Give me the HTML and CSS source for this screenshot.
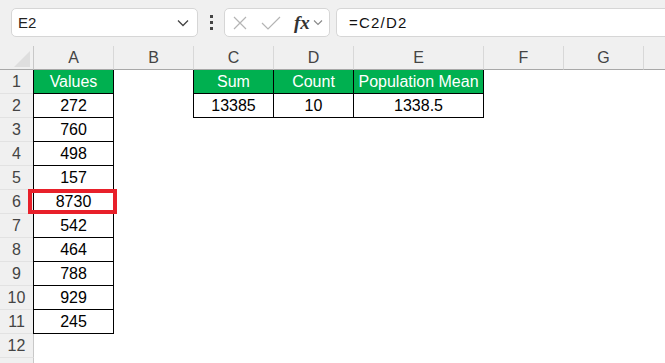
FILE: index.html
```html
<!DOCTYPE html>
<html>
<head>
<meta charset="utf-8">
<link rel="stylesheet" href="styles.css">
</head>
<body>
<div class="toolbar">
  <div class="namebox"><span>E2</span>
    <svg class="chev" width="12" height="8" viewBox="0 0 12 8"><path d="M1 1.5 L6 6.5 L11 1.5" fill="none" stroke="#444" stroke-width="1.3"/></svg>
  </div>
  <div class="dots"><i></i><i></i><i></i></div>
  <div class="controls">
    <svg width="14" height="14" viewBox="0 0 14 14"><path d="M1 1 L13 13 M13 1 L1 13" stroke="#b4b4b4" stroke-width="1.2"/></svg>
    <svg width="20" height="14" viewBox="0 0 20 14"><path d="M1 7 L7 13 L19 1" fill="none" stroke="#b4b4b4" stroke-width="1.2"/></svg>
    <span class="fx">fx</span>
    <svg width="10" height="7" viewBox="0 0 10 7"><path d="M1 1.5 L5 5.5 L9 1.5" fill="none" stroke="#888" stroke-width="1.1"/></svg>
  </div>
  <div class="formula">=C2/D2</div>
</div>
<div class="sheet">
  <div class="ch corner"><svg width="16" height="16" viewBox="0 0 16 16"><path d="M16 0 L16 16 L0 16 Z" fill="#dedede"/></svg></div>
  <div class="ch">A</div><div class="ch">B</div><div class="ch">C</div><div class="ch">D</div><div class="ch">E</div><div class="ch">F</div><div class="ch">G</div><div class="ch last"></div>

  <div class="rh">1</div><div class="c t head left">Values</div><div class="c"></div><div class="c t head left">Sum</div><div class="c t head">Count</div><div class="c t head">Population Mean</div><div class="c"></div><div class="c"></div><div class="c"></div>
  <div class="rh">2</div><div class="c t left">272</div><div class="c"></div><div class="c t left">13385</div><div class="c t">10</div><div class="c t">1338.5</div><div class="c"></div><div class="c"></div><div class="c"></div>
  <div class="rh">3</div><div class="c t left">760</div><div class="c"></div><div class="c"></div><div class="c"></div><div class="c"></div><div class="c"></div><div class="c"></div><div class="c"></div>
  <div class="rh">4</div><div class="c t left">498</div><div class="c"></div><div class="c"></div><div class="c"></div><div class="c"></div><div class="c"></div><div class="c"></div><div class="c"></div>
  <div class="rh">5</div><div class="c t left">157</div><div class="c"></div><div class="c"></div><div class="c"></div><div class="c"></div><div class="c"></div><div class="c"></div><div class="c"></div>
  <div class="rh">6</div><div class="c t left hl">8730</div><div class="c"></div><div class="c"></div><div class="c"></div><div class="c"></div><div class="c"></div><div class="c"></div><div class="c"></div>
  <div class="rh">7</div><div class="c t left">542</div><div class="c"></div><div class="c"></div><div class="c"></div><div class="c"></div><div class="c"></div><div class="c"></div><div class="c"></div>
  <div class="rh">8</div><div class="c t left">464</div><div class="c"></div><div class="c"></div><div class="c"></div><div class="c"></div><div class="c"></div><div class="c"></div><div class="c"></div>
  <div class="rh">9</div><div class="c t left">788</div><div class="c"></div><div class="c"></div><div class="c"></div><div class="c"></div><div class="c"></div><div class="c"></div><div class="c"></div>
  <div class="rh">10</div><div class="c t left">929</div><div class="c"></div><div class="c"></div><div class="c"></div><div class="c"></div><div class="c"></div><div class="c"></div><div class="c"></div>
  <div class="rh">11</div><div class="c t left">245</div><div class="c"></div><div class="c"></div><div class="c"></div><div class="c"></div><div class="c"></div><div class="c"></div><div class="c"></div>
  <div class="rh">12</div><div class="c"></div><div class="c"></div><div class="c"></div><div class="c"></div><div class="c"></div><div class="c"></div><div class="c"></div><div class="c"></div>
  <div class="rh"></div><div class="c"></div><div class="c"></div><div class="c"></div><div class="c"></div><div class="c"></div><div class="c"></div><div class="c"></div><div class="c"></div>
</div>
</body>
</html>
```

FILE: styles.css
```css
* { box-sizing: border-box; }
html, body { margin: 0; padding: 0; }
body {
  width: 665px;
  height: 363px;
  overflow: hidden;
  background: #ffffff;
  font-family: "Liberation Sans", Arial, sans-serif;
  font-size: 16px;
  color: #000;
}
.toolbar {
  height: 46px;
  background: #f0f0f0;
  display: flex;
  align-items: flex-start;
  padding: 8px 0 0 11px;
}
.namebox {
  width: 187px;
  height: 29px;
  background: #fff;
  border: 1px solid #d6d6d6;
  border-radius: 5px;
  display: flex;
  align-items: center;
  justify-content: space-between;
  padding: 0 8px 0 6px;
  color: #222;
  font-size: 15px;
}
.dots {
  width: 26px;
  height: 29px;
  display: flex;
  flex-direction: column;
  align-items: center;
  justify-content: center;
  gap: 3px;
}
.dots i { display: block; width: 3px; height: 3px; background: #444; }
.controls {
  width: 106px;
  height: 29px;
  background: #fff;
  border: 1px solid #d6d6d6;
  border-radius: 5px;
  display: flex;
  align-items: center;
  padding: 0 4px 0 8px;
  gap: 0;
}
.controls svg:nth-child(1) { margin-right: 14px; }
.controls svg:nth-child(2) { margin-right: 13px; }
.fx {
  font-family: "Liberation Serif", "DejaVu Serif", serif;
  font-style: italic;
  font-weight: bold;
  font-size: 19px;
  color: #333;
  margin-right: 3px;
  line-height: 1;
}
.formula {
  margin-left: 6px;
  flex: 1;
  height: 29px;
  background: #fff;
  border: 1px solid #d6d6d6;
  border-right: none;
  border-radius: 5px 0 0 5px;
  display: flex;
  align-items: center;
  padding-left: 12px;
  font-size: 15px;
  letter-spacing: 1.2px;
  color: #111;
}
.sheet {
  display: grid;
  grid-template-columns: 34px 80px 80px 80px 80px 130px 80px 80px 1fr;
  grid-template-rows: 24px;
  grid-auto-rows: 24px;
}
.ch {
  background: #f0f0f0;
  border-right: 1px solid #d8d8d8;
  border-bottom: 1px solid #a8a8a8;
  display: flex;
  align-items: center;
  justify-content: center;
  color: #444;
  font-size: 16px;
}
.ch.corner { justify-content: flex-end; align-items: flex-end; padding: 0 3px 2px 0; border-right-color: #c8c8c8; }
.ch.last { border-right: none; }
.rh {
  background: #f0f0f0;
  border-right: 1px solid #c8c8c8;
  border-bottom: 1px solid #e2e2e2;
  display: flex;
  align-items: center;
  justify-content: center;
  color: #444;
  font-size: 16px;
}
.c {
  display: flex;
  align-items: center;
  justify-content: center;
  background: #fff;
}
.c.t {
  border-right: 1px solid #000;
  border-bottom: 1px solid #000;
}
.c.left { box-shadow: -1px 0 0 #000; }
.c.head { background: #00b050; color: #fff; }
.hl { position: relative; }
.hl::after {
  content: "";
  position: absolute;
  left: -6px;
  top: -1px;
  right: -4px;
  bottom: -1px;
  border: 4px solid #e8202a;
}
```
